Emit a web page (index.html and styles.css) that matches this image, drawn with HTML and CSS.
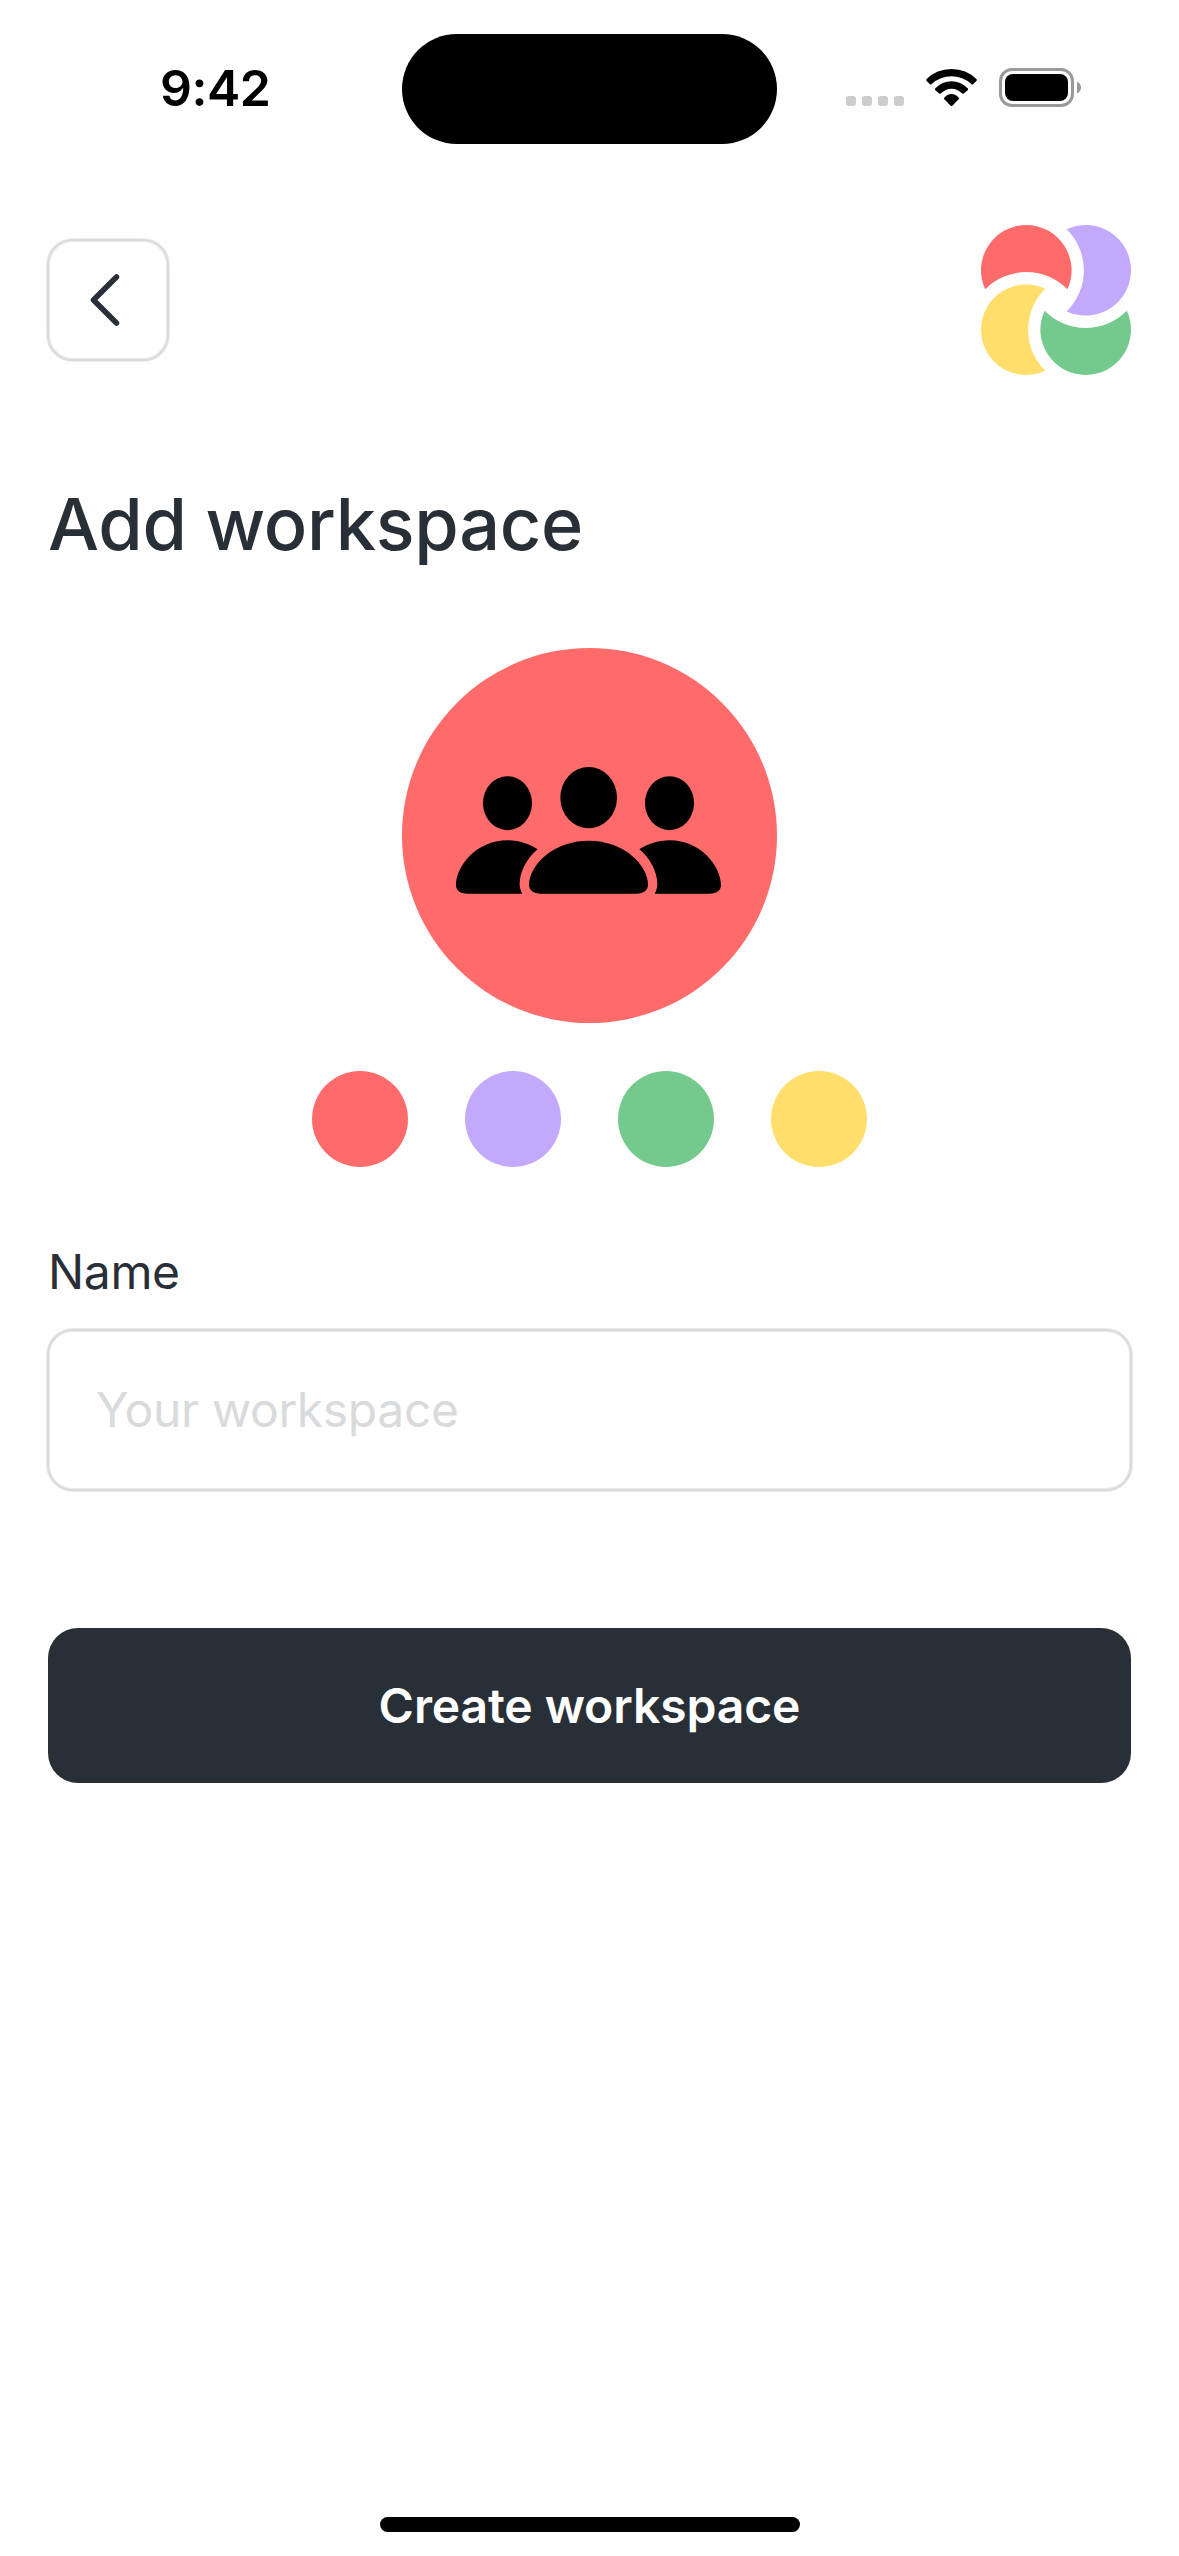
FILE: index.html
```html
<!DOCTYPE html>
<html lang="en">
<head>
<meta charset="utf-8">
<title>Add workspace</title>
<link rel="stylesheet" href="styles.css">
</head>
<body>
<div class="screen">
  <header class="status-bar">
    <div class="status-time">9:42</div>
    <div class="island"></div>
    <div class="status-icons">
      <div class="cellular"><i></i><i></i><i></i><i></i></div>
      <svg class="wifi" viewBox="558 147 153 111" aria-hidden="true">
        <path d="M560 177Q590 147 634.500 147T709 177Q712 180 709 183L700 192Q697 195 694 192Q668 169 634.500 169T575 192Q572 195 569 192L560 183Q557 180 560 177Z"/>
        <path d="M586 205Q607 184 634.500 184T683 205Q686 208 683 211L672 220Q669 223 666 220Q653 206 634.500 206T603 220Q600 223 597 220L586 211Q583 208 586 205Z"/>
        <path d="M613 233Q622 222 634.500 222T656 233Q659 236 656 238L637 257Q634.500 259 632 257L613 238Q610 236 613 233Z"/>
      </svg>
      <svg class="battery" viewBox="0 0 82 39" aria-hidden="true">
        <rect x="1.500" y="1.500" width="72" height="36" rx="11.500" fill="none" stroke="#999" stroke-width="3"/>
        <rect x="6" y="6" width="63" height="27" rx="8"/>
        <path d="M78 13.500Q82 15.500 82 19.500T78 25.500Z" fill="#999"/>
      </svg>
    </div>
  </header>

  <nav class="top-nav">
    <button class="back" aria-label="Back">
      <svg viewBox="0 0 36 60" aria-hidden="true"><path d="M29.500 7L6.500 30L29.500 53"/></svg>
    </button>
    <svg class="logo" viewBox="0 0 150 150" aria-hidden="true">
      <defs><path id="petal" d="M4.200 64.350A45.300 45.300 0 1 1 86.400 64.350A57.600 57.600 0 0 0 4.200 64.350Z"/></defs>
      <use href="#petal" fill="#ff6b6b"/>
      <use href="#petal" fill="#c3a9fc" transform="rotate(90 75 75)"/>
      <use href="#petal" fill="#74ca8c" transform="rotate(180 75 75)"/>
      <use href="#petal" fill="#ffde6b" transform="rotate(270 75 75)"/>
    </svg>
  </nav>

  <main class="content">
    <h1 class="title">Add workspace</h1>
    <div class="avatar">
      <svg viewBox="36 24 1125 1125" aria-hidden="true">
        <ellipse cx="596" cy="473" rx="85" ry="92"/>
        <path d="M417 735C417 675 490 602 596 602S774 675 774 735C774 750 760 761 740 761H451C431 761 417 750 417 735Z"/>
        <g id="member">
          <ellipse cx="352.500" cy="489.500" rx="73.500" ry="81"/>
          <path d="M198 735C198 680 258 601 352 601C388 601 420 613 443 628C410 655 389 697 389 732C389 743 392 752 397 761H232C212 761 198 752 198 735Z"/>
        </g>
        <use href="#member" transform="matrix(-1 0 0 1 1191 0)"/>
      </svg>
    </div>
    <div class="swatches">
      <span class="swatch red"></span>
      <span class="swatch purple"></span>
      <span class="swatch green"></span>
      <span class="swatch yellow"></span>
    </div>
    <label class="label" for="name">Name</label>
    <input class="field" id="name" type="text" placeholder="Your workspace">
    <button class="submit">Create workspace</button>
  </main>

  <footer class="home-area"><div class="home-indicator"></div></footer>
</div>
</body>
</html>
```
FILE: styles.css
```css
* { box-sizing: border-box; }

body {
  margin: 0;
  background: #fefefe;
  font-family: Inter, "Liberation Sans", sans-serif;
  color: #292f36;
}

button, input { font: inherit; margin: 0; }

.screen {
  display: flex;
  flex-direction: column;
  width: 1179px;
  height: 2556px;
}

.status-bar {
  display: grid;
  grid-template-columns: 402px 375px 402px;
  height: 177px;
  padding-top: 33px;
  color: #000;
}

.status-time {
  padding: 25px 0 0 160px;
  font-size: 50px;
  font-weight: 600;
  line-height: 60px;
  letter-spacing: -0.5px;
}

.island {
  height: 110px;
  margin-top: 1px;
  border-radius: 55px;
  background: #000;
}

.status-icons {
  display: flex;
  align-items: flex-start;
  padding: 35px 0 0 69px;
}

.cellular {
  display: flex;
  gap: 6px;
  margin: 28px 22px 0 0;
}

.cellular i {
  width: 10px;
  height: 10px;
  border-radius: 3px;
  background: #ccc;
}

.wifi { width: 51px; height: 37px; margin: 1px 22px 0 0; }
.battery { width: 82px; height: 39px; }

.top-nav {
  display: flex;
  justify-content: space-between;
  align-items: center;
  height: 246px;
  padding: 0 48px 0 47px;
}

.back {
  display: flex;
  align-items: center;
  justify-content: center;
  width: 122px;
  height: 122px;
  padding: 0;
  border: 2px solid #d9dadc;
  border-radius: 26px;
  background: #fff;
  box-shadow: 0 0 0 1px #d9dadc80, inset 0 0 0 1px #d9dadc80;
}

.back svg {
  width: 36px;
  height: 60px;
  margin-right: 7px;
  fill: none;
  stroke: #292f36;
  stroke-width: 5.5;
  stroke-linecap: round;
  stroke-linejoin: round;
}

.logo { width: 150px; height: 150px; }

.content {
  display: flex;
  flex-direction: column;
  padding: 57px 48px 0;
}

.title {
  margin: 0 0 80px;
  font-size: 72px;
  font-weight: 500;
  line-height: 88px;
  letter-spacing: -0.27px;
}

.avatar {
  align-self: center;
  width: 375px;
  height: 375px;
  border-radius: 50%;
  background: #ff6b6b;
}

.avatar svg { display: block; }

.swatches {
  display: flex;
  justify-content: center;
  gap: 57px;
  margin: 48px 0 76px;
}

.swatch { width: 96px; height: 96px; border-radius: 50%; }
.red { background: #ff6b6b; }
.purple { background: #c3a9fc; }
.green { background: #74ca8c; }
.yellow { background: #ffde6b; }

.label {
  font-size: 48px;
  line-height: 58px;
  letter-spacing: -0.35px;
}

.field {
  height: 162px;
  margin: 28px -1px 0;
  padding: 0 47px 2px;
  border: 2px solid #d9dadc;
  border-radius: 26px;
  background: #fff;
  box-shadow: 0 0 0 1px #d9dadc80, inset 0 0 0 1px #d9dadc80;
  font-size: 48px;
  letter-spacing: -0.35px;
}

.field::placeholder { color: #d9dadc; opacity: 1; }

.submit {
  height: 155px;
  margin-top: 137px;
  padding: 0;
  border: 0;
  border-radius: 30px;
  background: #292f36;
  color: #fff;
  font-size: 48px;
  font-weight: 600;
  letter-spacing: -0.1px;
}

.home-area {
  display: flex;
  justify-content: center;
  margin-top: auto;
  padding-bottom: 24px;
}

.home-indicator {
  width: 420px;
  height: 15px;
  border-radius: 7.5px;
  background: #000;
}
```
